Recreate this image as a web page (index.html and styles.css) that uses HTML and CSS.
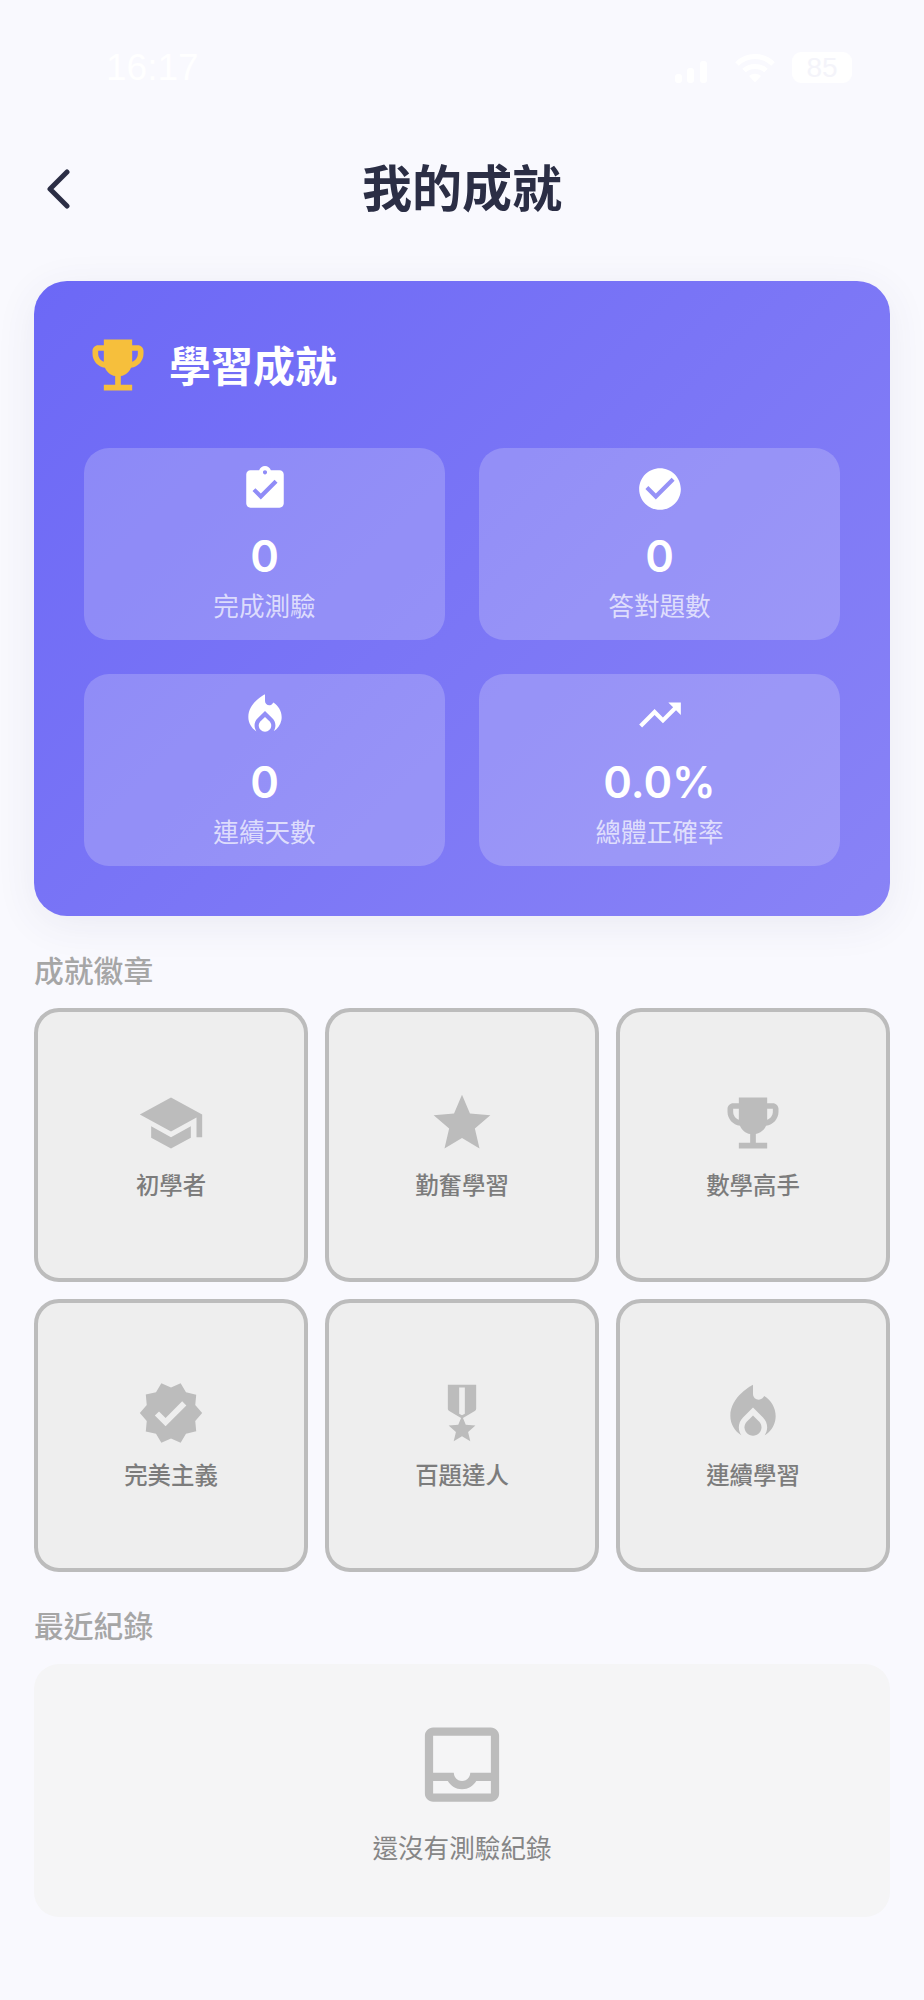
FILE: index.html
```html
<!doctype html>
<html lang="zh-Hant">
  <head>
    <meta charset="utf-8">
    <meta name="viewport" content="width=device-width, initial-scale=1">
    <title>我的成就</title>
    <link rel="stylesheet" href="styles.css">
  </head>
  <body>
    <div class="status_bar">
      <span class="status_bar__time">16:17</span>
      <div class="status_bar__icons">
        <svg class="signal" viewBox="0 0 32 22"><rect x="0" y="13" width="7" height="9" rx="3"/><rect x="12" y="7" width="7" height="15" rx="3"/><rect x="25" y="0" width="7" height="22" rx="3"/></svg>
        <svg class="wifi" viewBox="0 0 40 30"><path d="M2 11C12 1 28 1 38 11M9 17.500C15 12 25 12 31 17.500" fill="none" stroke="#fff" stroke-width="5"/><path d="M14 23c3.500-3 8.500-3 12 0l-6 6.500z" fill="#fff"/></svg>
        <div class="battery">85</div>
      </div>
    </div>

    <header class="top_bar">
      <button class="top_bar__back" aria-label="back">
        <svg viewBox="0 0 24 40"><path d="M21 3L4 20l17 17" fill="none" stroke="#2b2e45" stroke-width="5" stroke-linecap="round" stroke-linejoin="round"/></svg>
      </button>
      <h1>我的成就</h1>
    </header>

    <main class="content">
      <section class="hero">
        <div class="hero__head">
          <svg class="hero__trophy" viewBox="0 0 24 24"><path d="M19 5h-2V3H7v2H5c-1.100 0-2 .9-2 2v1c0 2.550 1.920 4.630 4.390 4.940.63 1.500 1.980 2.630 3.610 2.960V19H7v2h10v-2h-4v-3.100c1.630-.33 2.980-1.460 3.610-2.960C19.080 12.630 21 10.550 21 8V7c0-1.100-.9-2-2-2zM5 8V7h2v3.820C5.840 10.400 5 9.300 5 8zm14 0c0 1.300-.84 2.400-2 2.820V7h2v1z"/></svg>
          <h2>學習成就</h2>
        </div>
        <div class="hero__stats">
          <div class="stat">
            <svg viewBox="0 0 24 24"><path d="M19 3h-4.180C14.400 1.840 13.300 1 12 1c-1.300 0-2.400.84-2.820 2H5c-1.100 0-2 .9-2 2v14c0 1.100.9 2 2 2h14c1.100 0 2-.9 2-2V5c0-1.100-.9-2-2-2zm-7 0c.55 0 1 .45 1 1s-.45 1-1 1-1-.45-1-1 .45-1 1-1zm-2 14l-4-4 1.410-1.410L10 14.170l6.590-6.590L18 9l-8 8z"/></svg>
            <div class="stat__value">0</div>
            <div class="stat__label">完成測驗</div>
          </div>
          <div class="stat">
            <svg viewBox="0 0 24 24"><path d="M12 2C6.480 2 2 6.480 2 12s4.480 10 10 10 10-4.480 10-10S17.520 2 12 2zm-2 15l-5-5 1.410-1.410L10 14.170l7.590-7.590L19 8l-9 9z"/></svg>
            <div class="stat__value">0</div>
            <div class="stat__label">答對題數</div>
          </div>
          <div class="stat">
            <svg viewBox="0 0 24 24"><path d="M12 12.900l-2.130 2.090C9.310 15.550 9 16.280 9 17.060 9 18.680 10.350 20 12 20s3-1.320 3-2.940c0-.78-.31-1.520-.87-2.070L12 12.900z"/><path d="M16 6l-.44.55C14.380 8.020 12 7.190 12 5.300V2S4 6 4 13c0 2.920 1.560 5.470 3.890 6.860-.56-.79-.89-1.760-.89-2.800 0-1.320.52-2.560 1.470-3.500L12 10.100l3.530 3.470c.95.93 1.470 2.170 1.470 3.500 0 1.020-.31 1.960-.85 2.750 1.890-1.150 3.290-3.060 3.710-5.300.66-3.450-1.070-6.720-3.860-8.520z"/></svg>
            <div class="stat__value">0</div>
            <div class="stat__label">連續天數</div>
          </div>
          <div class="stat">
            <svg viewBox="0 0 24 24"><path d="M16 6l2.290 2.290-4.880 4.880-4-4L2 16.590 3.410 18l6-6 4 4 6.300-6.290L22 12V6z"/></svg>
            <div class="stat__value">0.0%</div>
            <div class="stat__label">總體正確率</div>
          </div>
        </div>
      </section>

      <h3 class="section_title section_title--badges">成就徽章</h3>
      <div class="badges">
        <div class="badge">
          <svg viewBox="0 0 24 24"><path d="M5 13.180v4L12 21l7-3.820v-4L12 17l-7-3.820zM12 3L1 9l11 6 9-4.910V17h2V9L12 3z"/></svg>
          <span>初學者</span>
        </div>
        <div class="badge">
          <svg viewBox="0 0 24 24"><path d="M12 17.270L18.180 21l-1.640-7.030L22 9.240l-7.190-.61L12 2 9.190 8.630 2 9.240l5.460 4.730L5.820 21z"/></svg>
          <span>勤奮學習</span>
        </div>
        <div class="badge">
          <svg viewBox="0 0 24 24"><path d="M19 5h-2V3H7v2H5c-1.100 0-2 .9-2 2v1c0 2.550 1.920 4.630 4.390 4.940.63 1.500 1.980 2.630 3.610 2.960V19H7v2h10v-2h-4v-3.100c1.630-.33 2.980-1.460 3.610-2.960C19.080 12.630 21 10.550 21 8V7c0-1.100-.9-2-2-2zM5 8V7h2v3.820C5.840 10.400 5 9.300 5 8zm14 0c0 1.300-.84 2.400-2 2.820V7h2v1z"/></svg>
          <span>數學高手</span>
        </div>
        <div class="badge">
          <svg viewBox="0 0 24 24"><path d="M23 12l-2.440-2.790.34-3.690-3.610-.82-1.890-3.200L12 2.960 8.600 1.500 6.710 4.690 3.100 5.500l.34 3.700L1 12l2.440 2.790-.34 3.700 3.610.82L8.600 22.500l3.400-1.470 3.400 1.460 1.890-3.190 3.610-.82-.34-3.690L23 12zm-12.910 4.720l-3.800-3.810 1.480-1.480 2.320 2.330 5.850-5.870 1.480 1.480-7.330 7.350z"/></svg>
          <span>完美主義</span>
        </div>
        <div class="badge">
          <svg viewBox="0 0 24 24"><path d="M17 10.430V2H7v8.430c0 .35.18.68.49.86l4.180 2.510-.99 2.340-3.410.29 2.590 2.240L9.070 22 12 20.230 14.930 22l-.78-3.330 2.590-2.240-3.410-.29-.99-2.340 4.180-2.510c.3-.18.48-.5.48-.86zm-4 1.800l-1 .6-1-.6V3h2v9.230z"/></svg>
          <span>百題達人</span>
        </div>
        <div class="badge">
          <svg viewBox="0 0 24 24"><path d="M12 12.900l-2.130 2.090C9.310 15.550 9 16.280 9 17.060 9 18.680 10.350 20 12 20s3-1.320 3-2.940c0-.78-.31-1.520-.87-2.070L12 12.900z"/><path d="M16 6l-.44.55C14.380 8.020 12 7.190 12 5.300V2S4 6 4 13c0 2.920 1.560 5.470 3.890 6.860-.56-.79-.89-1.760-.89-2.800 0-1.320.52-2.560 1.470-3.500L12 10.100l3.530 3.470c.95.93 1.470 2.170 1.470 3.500 0 1.020-.31 1.960-.85 2.750 1.890-1.150 3.290-3.060 3.710-5.300.66-3.450-1.070-6.720-3.860-8.520z"/></svg>
          <span>連續學習</span>
        </div>
      </div>

      <h3 class="section_title section_title--recent">最近紀錄</h3>
      <div class="empty">
        <svg viewBox="0 0 24 24"><path d="M19 3H5c-1.100 0-2 .9-2 2v14c0 1.100.9 2 2 2h14c1.100 0 2-.9 2-2V5c0-1.100-.9-2-2-2zm0 16H5v-3h3.560c.69 1.190 1.970 2 3.450 2s2.750-.81 3.450-2H19v3zm0-5h-4.990c0 1.100-.9 2-2 2s-2-.9-2-2H5V5h14v9z"/></svg>
        <p>還沒有測驗紀錄</p>
      </div>
    </main>
  </body>
</html>
```

FILE: styles.css
```css
* {
  box-sizing: border-box;
}
body {
  margin: 0;
  min-height: 2000px;
  background: #f9f9fe;
  font-family: Inter, "Noto Sans CJK TC", sans-serif;
}
h1, h2, h3, p {
  margin: 0;
}
svg {
  display: block;
  fill: currentColor;
}

/*--------------------------*/
.status_bar {
  height: 110px;
  padding: 46px 72px 0 106px;
  display: flex;
  justify-content: space-between;
  align-items: flex-start;
  color: #fff;
}
.status_bar__time {
  font-family: "Liberation Sans", sans-serif;
  font-size: 37px;
  line-height: 44px;
}
.status_bar__icons {
  display: flex;
  align-items: center;
  gap: 17px;
  margin-top: 6px;
}
.signal {
  width: 32px;
  height: 22px;
  margin: 8px 11px 0 0;
}
.wifi {
  width: 40px;
  height: 30px;
}
.battery {
  width: 60px;
  height: 31px;
  border-radius: 9px;
  background: #fff;
  color: #f4f4fa;
  font-family: "Liberation Sans", sans-serif;
  font-size: 28px;
  line-height: 31px;
  text-align: center;
}

/*--------------------------*/
.top_bar {
  height: 154px;
  padding: 4px 34px 0;
  display: grid;
  grid-template-columns: 1fr auto 1fr;
  align-items: center;
}
.top_bar h1 {
  grid-column: 2;
  color: #2b2e45;
  font-size: 50px;
  line-height: 60px;
  font-weight: 700;
}
.top_bar__back {
  grid-column: 1;
  grid-row: 1;
  width: 50px;
  padding: 0 0 0 12px;
  border: 0;
  background: none;
}
.top_bar__back svg {
  width: 24px;
  height: 40px;
}

/*--------------------------*/
.content {
  padding: 17px 34px 0;
}
.hero {
  padding: 50px;
  border-radius: 33px;
  background: linear-gradient(135deg, #6c68f6 0%, #8983f6 100%);
  box-shadow: 0 8px 40px rgba(60, 60, 110, 0.08);
}
.hero__head {
  display: flex;
  align-items: center;
  gap: 17px;
  height: 68px;
  margin-bottom: 49px;
}
.hero__trophy {
  width: 68px;
  height: 68px;
  flex: none;
  color: #f6bf3c;
}
.hero__head h2 {
  margin-bottom: 4px;
  color: #fff;
  font-size: 42px;
  font-weight: 700;
}
.hero__stats {
  display: grid;
  grid-template-columns: 1fr 1fr;
  gap: 34px;
}
.stat {
  height: 192px;
  padding-top: 16px;
  border-radius: 25px;
  background: rgba(255, 255, 255, 0.2);
  color: #fff;
  display: flex;
  flex-direction: column;
  align-items: center;
}
.stat svg {
  width: 50px;
  height: 50px;
}
.stat__value {
  margin-top: 17px;
  font-size: 43.500px;
  line-height: 50px;
  font-weight: 600;
}
.stat__label {
  margin-top: 8px;
  color: rgba(255, 255, 255, 0.7);
  font-size: 25.600px;
  line-height: 36px;
}

/*--------------------------*/
.section_title {
  color: #a6a6a6;
  font-size: 29.800px;
  line-height: 40px;
  font-weight: 500;
}
.section_title--badges {
  margin: 35px 0 17px;
}
.section_title--recent {
  margin: 34px 0 18px;
}
.badges {
  display: grid;
  grid-template-columns: repeat(3, 1fr);
  gap: 17px;
}
.badge {
  height: 273.500px;
  border: 4px solid #bcbcbc;
  border-radius: 25px;
  background: #eeeeee;
  color: #bcbcbc;
  display: flex;
  flex-direction: column;
  align-items: center;
  justify-content: center;
  gap: 14px;
}
.badge svg {
  width: 68px;
  height: 68px;
}
.badge span {
  color: #7c7c7c;
  font-size: 23.400px;
  line-height: 30px;
  font-weight: 500;
}

/*--------------------------*/
.empty {
  padding: 50px 0;
  height: 253px;
  border-radius: 25px;
  background: #f5f5f6;
  color: #bcbcbc;
  display: flex;
  flex-direction: column;
  align-items: center;
}
.empty svg {
  width: 100px;
  height: 100px;
  margin-top: 1px;
}
.empty p {
  margin-top: 17px;
  color: #868686;
  font-size: 25.600px;
  line-height: 36px;
}
```
